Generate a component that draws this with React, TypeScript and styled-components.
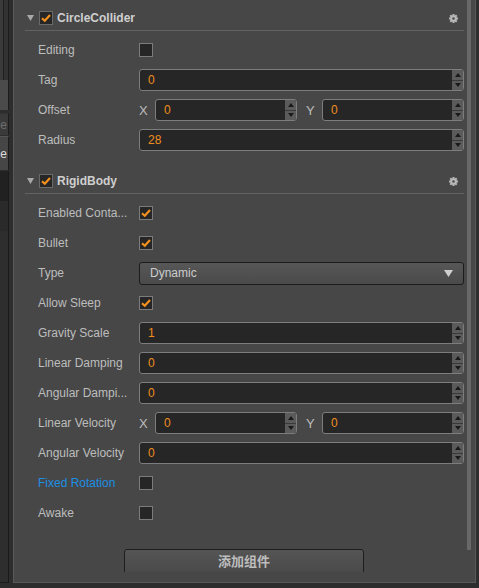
import React from 'react';
import styled, { createGlobalStyle } from 'styled-components';

type Field =
  | { kind: 'check'; label: string; checked: boolean; highlight?: boolean }
  | { kind: 'number'; label: string; value: string }
  | { kind: 'vec2'; label: string; x: string; y: string }
  | { kind: 'select'; label: string; value: string };

type Comp = { name: string; enabled: boolean; fields: Field[] };

const components: Comp[] = [
  {
    name: 'CircleCollider',
    enabled: true,
    fields: [
      { kind: 'check', label: 'Editing', checked: false },
      { kind: 'number', label: 'Tag', value: '0' },
      { kind: 'vec2', label: 'Offset', x: '0', y: '0' },
      { kind: 'number', label: 'Radius', value: '28' },
    ],
  },
  {
    name: 'RigidBody',
    enabled: true,
    fields: [
      { kind: 'check', label: 'Enabled Conta...', checked: true },
      { kind: 'check', label: 'Bullet', checked: true },
      { kind: 'select', label: 'Type', value: 'Dynamic' },
      { kind: 'check', label: 'Allow Sleep', checked: true },
      { kind: 'number', label: 'Gravity Scale', value: '1' },
      { kind: 'number', label: 'Linear Damping', value: '0' },
      { kind: 'number', label: 'Angular Dampi...', value: '0' },
      { kind: 'vec2', label: 'Linear Velocity', x: '0', y: '0' },
      { kind: 'number', label: 'Angular Velocity', value: '0' },
      { kind: 'check', label: 'Fixed Rotation', checked: false, highlight: true },
      { kind: 'check', label: 'Awake', checked: false },
    ],
  },
];

const GlobalStyle = createGlobalStyle`
  html, body {
    margin: 0;
    padding: 0;
    background: #2d2d2d;
  }
  body {
    font-family: "Liberation Sans", Arial, sans-serif;
    font-size: 12px;
  }
`;

const Page = styled.div`
  display: flex;
  height: 588px;
  overflow: hidden;
  background: #2d2d2d;
`;

const SideStrip = styled.div`
  width: 9px;
  height: 583px;
  box-sizing: border-box;
  display: flex;
  flex-direction: column;
  border-bottom: 1px solid #1c1c1c;
`;

const SideTop = styled.div`
  height: 80px;
  background: linear-gradient(to right, #3a3a3a 0 3px, #1f1f1f 3px 4px, #333 4px 8px, #1d1d1d 8px 9px);
`;

const SideBlock = styled.div`
  height: 30px;
  background: #4b4b4b;
  border-right: 1px solid #1d1d1d;
  margin-bottom: 3px;
`;

const SideTab = styled.div<{ $active?: boolean }>`
  height: ${p => (p.$active ? 34 : 22)}px;
  box-sizing: border-box;
  display: flex;
  justify-content: flex-end;
  align-items: center;
  overflow: hidden;
  white-space: nowrap;
  padding-right: 1px;
  background: ${p => (p.$active ? '#464646' : '#3a3a3a')};
  border-top: 1px solid ${p => (p.$active ? '#555' : '#333')};
  border-right: 1px solid #1d1d1d;
  color: ${p => (p.$active ? '#dcdcdc' : '#6f6f6f')};
  font-size: 12px;
  margin-bottom: 1px;
`;

const SideRest = styled.div`
  flex: 1;
  background: linear-gradient(#212121 0 30px, #2a2a2a 30px 60px, #2e2e2e 60px);
  border-right: 1px solid #1a1a1a;
`;

const Inspector = styled.div`
  margin-left: 4px;
  width: 463px;
  height: 583px;
  box-sizing: border-box;
  background: #474747;
  border-left: 1px solid #595959;
  border-right: 1px solid #595959;
  border-bottom: 1px solid #595959;
`;

const ScrollArea = styled.div`
  display: flex;
  height: 572px;
  overflow: hidden;
`;

const Content = styled.div`
  flex: 1;
  padding: 6px 3px 0 11px;
`;

const Scrollbar = styled.div`
  width: 8px;
  display: flex;
`;

const Thumb = styled.div`
  width: 4px;
  height: 550px;
  background: #686868;
`;

const Section = styled.section`
  margin-bottom: 14px;
`;

const Header = styled.div`
  height: 24px;
  display: flex;
  align-items: center;
  padding-left: 2px;
  border-bottom: 1px solid #626262;
  margin-bottom: 4px;
`;

const Spacer = styled.span`
  width: 5px;
`;

const Title = styled.span`
  flex: 1;
  margin-left: 4px;
  color: #cfcfcf;
  font-weight: bold;
  font-size: 12px;
`;

const GearWrap = styled.span`
  display: flex;
  margin-right: 6px;
`;

const Row = styled.div`
  height: 30px;
  display: flex;
  align-items: center;
  padding-left: 13px;
`;

const Label = styled.div<{ $highlight?: boolean }>`
  width: 101px;
  flex: none;
  white-space: nowrap;
  overflow: hidden;
  color: ${p => (p.$highlight ? '#1a8fe3' : '#bdbdbd')};
`;

const Box = styled.div<{ $dark?: boolean }>`
  width: 14px;
  height: 14px;
  box-sizing: border-box;
  border: 1px solid ${p => (p.$dark ? '#6a6a6a' : '#7c7c7c')};
  background: #262626;
  display: flex;
  align-items: center;
  justify-content: center;
`;

const NumberBox = styled.div`
  flex: 1;
  min-width: 0;
  height: 22px;
  box-sizing: border-box;
  display: flex;
  border: 1px solid #7d7d7d;
  border-radius: 3px;
  background: #262626;
  overflow: hidden;
`;

const Value = styled.span`
  flex: 1;
  padding-left: 8px;
  line-height: 20px;
  color: #ee8d1f;
`;

const Spinner = styled.div`
  width: 11px;
  display: flex;
  flex-direction: column;
  background: #5b5b5b;
`;

const SpinHalf = styled.div<{ $top?: boolean }>`
  flex: 1;
  display: flex;
  align-items: center;
  justify-content: center;
  border-bottom: ${p => (p.$top ? '1px solid #3a3a3a' : 'none')};
`;

const VecWrap = styled.div`
  flex: 1;
  display: flex;
  gap: 9px;
`;

const VecHalf = styled.div`
  flex: 1;
  display: flex;
  align-items: center;
`;

const Axis = styled.span`
  width: 16px;
  flex: none;
  color: #bdbdbd;
  font-size: 13px;
`;

const Select = styled.div`
  flex: 1;
  height: 23px;
  box-sizing: border-box;
  display: flex;
  align-items: center;
  justify-content: space-between;
  padding: 0 10px;
  border: 1px solid #1c1c1c;
  border-radius: 3px;
  background: linear-gradient(#575757, #4a4a4a);
  color: #cccccc;
`;

const AddButton = styled.div`
  margin: 21px 0 0 99px;
  width: 240px;
  height: 30px;
  box-sizing: border-box;
  border: 1px solid #1e1e1e;
  border-radius: 3px 3px 0 0;
  background: linear-gradient(#555555, #474747);
  color: #bdbdbd;
  font-family: "Liberation Sans", "Noto Sans CJK SC", sans-serif;
  font-weight: bold;
  font-size: 13px;
  line-height: 23px;
  text-align: center;
`;

const Tick = () => (
  <svg width="12" height="12" viewBox="0 0 12 12">
    <path d="M2 6.2 L4.8 8.8 L10 3" fill="none" stroke="#f5911d" strokeWidth="2.2" />
  </svg>
);

const Fold = () => (
  <svg width="7" height="6" viewBox="0 0 7 6">
    <path d="M0 0 H7 L3.5 6 Z" fill="#a8a8a8" />
  </svg>
);

const Gear = () => (
  <svg width="9" height="9" viewBox="0 0 9 9">
    <g fill="#b8b8b8" transform="translate(4.5 4.5)">
      {[0, 45, 90, 135].map(a => (
        <rect key={a} x="-1" y="-4.5" width="2" height="9" transform={`rotate(${a})`} />
      ))}
      <circle r="3.2" />
    </g>
    <circle cx="4.5" cy="4.5" r="1.2" fill="#474747" />
  </svg>
);

const Arrow = ({ up }: { up?: boolean }) => (
  <svg width="6" height="4" viewBox="0 0 6 4">
    <path d={up ? 'M0 4 L3 0 L6 4 Z' : 'M0 0 L6 0 L3 4 Z'} fill="#1a1a1a" />
  </svg>
);

const NumberInput = ({ value }: { value: string }) => (
  <NumberBox>
    <Value>{value}</Value>
    <Spinner>
      <SpinHalf $top>
        <Arrow up />
      </SpinHalf>
      <SpinHalf>
        <Arrow />
      </SpinHalf>
    </Spinner>
  </NumberBox>
);

const FieldRow = ({ field }: { field: Field }) => (
  <Row>
    <Label $highlight={field.kind === 'check' && field.highlight}>{field.label}</Label>
    {field.kind === 'check' && <Box>{field.checked && <Tick />}</Box>}
    {field.kind === 'number' && <NumberInput value={field.value} />}
    {field.kind === 'vec2' && (
      <VecWrap>
        <VecHalf>
          <Axis>X</Axis>
          <NumberInput value={field.x} />
        </VecHalf>
        <VecHalf>
          <Axis>Y</Axis>
          <NumberInput value={field.y} />
        </VecHalf>
      </VecWrap>
    )}
    {field.kind === 'select' && (
      <Select>
        <span>{field.value}</span>
        <svg width="9" height="7" viewBox="0 0 9 7">
          <path d="M0 0 H9 L4.5 7 Z" fill="#cfcfcf" />
        </svg>
      </Select>
    )}
  </Row>
);

const App = () => (
  <>
    <GlobalStyle />
    <Page>
      <SideStrip>
        <SideTop />
        <SideBlock />
        <SideTab>Console</SideTab>
        <SideTab $active>Scene</SideTab>
        <SideRest />
      </SideStrip>
      <Inspector>
        <ScrollArea>
          <Content>
            {components.map(c => (
              <Section key={c.name}>
                <Header>
                  <Fold />
                  <Spacer />
                  <Box $dark>{c.enabled && <Tick />}</Box>
                  <Title>{c.name}</Title>
                  <GearWrap>
                    <Gear />
                  </GearWrap>
                </Header>
                {c.fields.map(f => (
                  <FieldRow key={f.label} field={f} />
                ))}
              </Section>
            ))}
            <AddButton>添加组件</AddButton>
          </Content>
          <Scrollbar>
            <Thumb />
          </Scrollbar>
        </ScrollArea>
      </Inspector>
    </Page>
  </>
);

export default App;
